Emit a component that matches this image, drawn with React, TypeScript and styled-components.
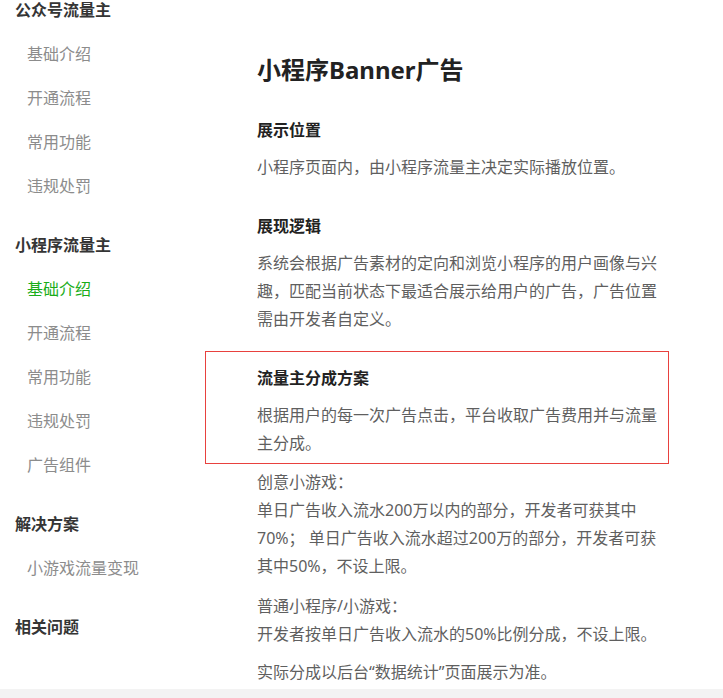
import React from "react";
import styled, { createGlobalStyle } from "styled-components";

const Global = createGlobalStyle`
  html, body { margin: 0; padding: 0; background: #fff; }
  body {
    font-family: "Noto Sans", "Noto Sans CJK SC", sans-serif;
    -webkit-font-smoothing: antialiased;
    overflow: hidden;
  }
`;

const Page = styled.div`
  display: flex;
  flex-direction: column;
  width: 723px;
`;

const Body = styled.div`
  display: grid;
  grid-template-columns: 257px 1fr;
  align-items: start;
`;

const Sidebar = styled.nav`
  display: flex;
  flex-direction: column;
  gap: 15px;
  margin-top: -12px;
  padding-left: 15px;
`;

const Group = styled.div`
  display: flex;
  flex-direction: column;
`;

const GroupTitle = styled.div`
  font-size: 16px;
  font-weight: 700;
  line-height: 44px;
  height: 44px;
  color: #353535;
`;

const Item = styled.div<{ $active?: boolean }>`
  font-size: 16px;
  line-height: 44px;
  height: 44px;
  padding-left: 12px;
  color: ${(p) => (p.$active ? "#1aad19" : "#8c8c8c")};
`;

const Main = styled.main`
  width: 400px;
  padding-top: 52px;
  padding-bottom: 3px;
  display: flex;
  flex-direction: column;
`;

const Title = styled.h1`
  margin: 0 0 28px;
  font-size: 24px;
  line-height: 36px;
  font-weight: 700;
  color: #222;
`;

const Section = styled.section`
  margin-bottom: 31px;
`;

const Highlight = styled.section`
  margin: -13px -12px 4px -52px;
  padding: 12px 11px 6px 51px;
  border: 1px solid #e8413e;
`;

const Heading = styled.h3`
  margin: 0 0 9px;
  font-size: 16px;
  line-height: 28px;
  font-weight: 700;
  color: #222;
`;

const Text = styled.p<{ $gap?: number }>`
  margin: 0 0 ${(p) => p.$gap ?? 0}px;
  font-size: 16px;
  line-height: 28px;
  color: #5f5f5f;
`;

const Footer = styled.footer`
  height: 60px;
  background: #f3f3f3;
`;

const groups: { title: string; items: string[]; active?: number }[] = [
  { title: "公众号流量主", items: ["基础介绍", "开通流程", "常用功能", "违规处罚"] },
  {
    title: "小程序流量主",
    items: ["基础介绍", "开通流程", "常用功能", "违规处罚", "广告组件"],
    active: 0,
  },
  { title: "解决方案", items: ["小游戏流量变现"] },
  { title: "相关问题", items: [] },
];

export default function App() {
  return (
    <Page>
      <Global />
      <Body>
        <Sidebar>
          {groups.map((g) => (
            <Group key={g.title}>
              <GroupTitle>{g.title}</GroupTitle>
              {g.items.map((it, i) => (
                <Item key={it} $active={g.active === i}>
                  {it}
                </Item>
              ))}
            </Group>
          ))}
        </Sidebar>
        <Main>
          <Title>小程序Banner广告</Title>
          <Section>
            <Heading>展示位置</Heading>
            <Text>小程序页面内，由小程序流量主决定实际播放位置。</Text>
          </Section>
          <Section>
            <Heading>展现逻辑</Heading>
            <Text>
              系统会根据广告素材的定向和浏览小程序的用户画像与兴
              <br />
              趣，匹配当前状态下最适合展示给用户的广告，广告位置
              <br />
              需由开发者自定义。
            </Text>
          </Section>
          <Highlight>
            <Heading>流量主分成方案</Heading>
            <Text>
              根据用户的每一次广告点击，平台收取广告费用并与流量
              <br />
              主分成。
            </Text>
          </Highlight>
          <Text $gap={12}>
            创意小游戏：
            <br />
            单日广告收入流水200万以内的部分，开发者可获其中
            <br />
            70%； 单日广告收入流水超过200万的部分，开发者可获
            <br />
            其中50%，不设上限。
          </Text>
          <Text $gap={10}>
            普通小程序/小游戏：
            <br />
            开发者按单日广告收入流水的50%比例分成，不设上限。
          </Text>
          <Text>实际分成以后台“数据统计”页面展示为准。</Text>
        </Main>
      </Body>
      <Footer />
    </Page>
  );
}
